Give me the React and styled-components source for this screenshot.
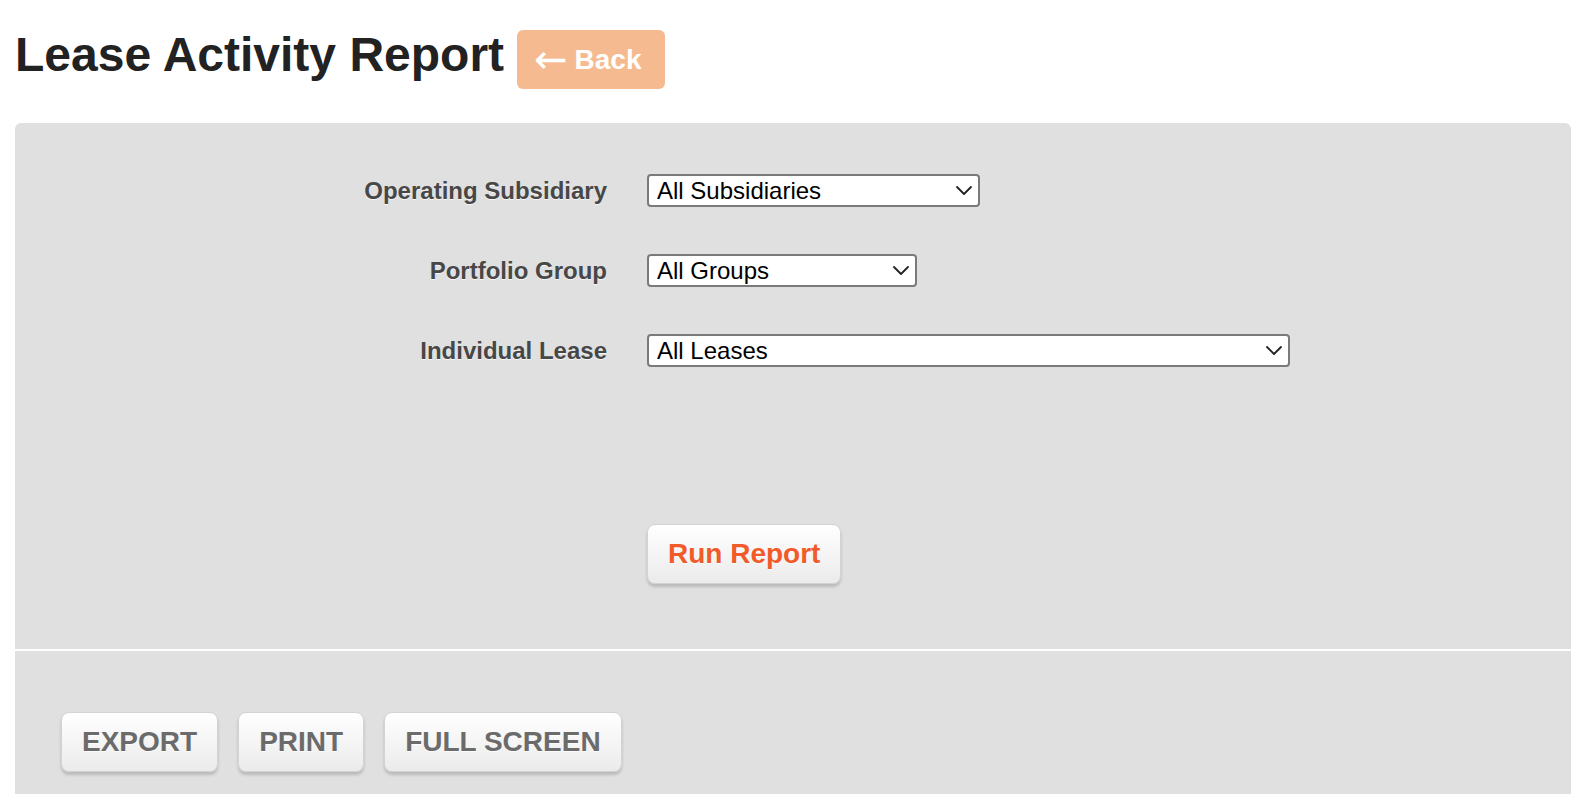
import React from 'react';
import styled, { createGlobalStyle } from 'styled-components';

const GlobalStyle = createGlobalStyle`
  html, body { margin: 0; padding: 0; background: #ffffff; }
  body { font-family: "Liberation Sans", Arial, Helvetica, sans-serif; }
  * { box-sizing: border-box; }
`;

const Page = styled.div`
  padding: 0 15px;
`;

const Header = styled.header`
  display: flex;
  align-items: flex-start;
  gap: 13px;
  padding-top: 27px;
`;

const Title = styled.h1`
  margin: 0;
  font-size: 48px;
  line-height: 55px;
  font-weight: 700;
  color: #222222;
`;

const BackButton = styled.button`
  display: inline-flex;
  align-items: center;
  gap: 7px;
  margin-top: 3px;
  height: 59px;
  padding: 0 23px 0 17px;
  border: none;
  border-radius: 6px;
  background: #f5ba8f;
  color: #ffffff;
  font-family: "Liberation Sans", Arial, sans-serif;
  font-size: 28px;
  font-weight: 700;
  line-height: 32px;
  cursor: pointer;
`;

const Arrow = styled.span`
  font-family: "DejaVu Sans", sans-serif;
  font-weight: 400;
  font-size: 40px;
  line-height: 32px;
  position: relative;
  top: -1px;
`;

const Panel = styled.section`
  margin-top: 34px;
  background: #e0e0e0;
  border-radius: 6px 6px 0 0;
`;

const FormSection = styled.div`
  padding: 51px 0 65px;
  border-bottom: 2px solid #ffffff;
`;

const FormGrid = styled.div`
  display: grid;
  grid-template-columns: 592px 1fr;
  column-gap: 40px;
  row-gap: 47px;
  align-items: center;
  justify-items: start;
`;

const Label = styled.label`
  justify-self: end;
  font-size: 24px;
  font-weight: 700;
  color: #474747;
  text-shadow: 0 1px 0 rgba(255, 255, 255, 0.7);
  white-space: nowrap;
`;

const SelectWrap = styled.div`
  position: relative;
  width: ${(p) => p.$width}px;
`;

const Select = styled.select`
  appearance: none;
  -webkit-appearance: none;
  display: block;
  width: 100%;
  height: 33px;
  padding: 0 30px 0 8px;
  border: 2px solid #7a7a7a;
  border-radius: 4px;
  background: #ffffff;
  color: #000000;
  font-family: "Liberation Sans", Arial, sans-serif;
  font-size: 24px;
  line-height: 29px;
`;

const Chevron = styled.svg`
  position: absolute;
  right: 8px;
  top: 50%;
  width: 16px;
  height: 9px;
  margin-top: -5px;
  pointer-events: none;
`;

const RaisedButton = styled.button`
  height: 60px;
  padding: 0 20px;
  border: 1px solid #d3d3d3;
  border-radius: 8px;
  background: linear-gradient(#ffffff, #ebebeb);
  box-shadow: 0 3px 3px rgba(0, 0, 0, 0.17);
  color: ${(p) => (p.$accent ? '#f15a29' : '#6b6b6b')};
  font-family: "Liberation Sans", Arial, sans-serif;
  font-size: 28px;
  font-weight: 700;
  line-height: 32px;
  text-shadow: 0 1px 0 rgba(255, 255, 255, 0.8);
  cursor: pointer;
  white-space: nowrap;
`;

const RunCell = styled.div`
  grid-column: 2;
  margin-top: 110px;
`;

const Toolbar = styled.div`
  display: flex;
  gap: 20px;
  padding: 61px 46px 40px;
`;

function Dropdown({ width, value }) {
  return (
    <SelectWrap $width={width}>
      <Select defaultValue={value}>
        <option value={value}>{value}</option>
      </Select>
      <Chevron viewBox="0 0 16 9">
        <path d="M1 1 L8 8 L15 1" fill="none" stroke="#222" strokeWidth="1.8" strokeLinecap="round" strokeLinejoin="round" />
      </Chevron>
    </SelectWrap>
  );
}

export default function App() {
  return (
    <>
      <GlobalStyle />
      <Page>
        <Header>
          <Title>Lease Activity Report</Title>
          <BackButton>
            <Arrow>←</Arrow>
            <span>Back</span>
          </BackButton>
        </Header>
        <Panel>
          <FormSection>
            <FormGrid>
              <Label>Operating Subsidiary</Label>
              <Dropdown width={333} value="All Subsidiaries" />
              <Label>Portfolio Group</Label>
              <Dropdown width={270} value="All Groups" />
              <Label>Individual Lease</Label>
              <Dropdown width={643} value="All Leases" />
              <RunCell>
                <RaisedButton $accent>Run Report</RaisedButton>
              </RunCell>
            </FormGrid>
          </FormSection>
          <Toolbar>
            <RaisedButton>EXPORT</RaisedButton>
            <RaisedButton>PRINT</RaisedButton>
            <RaisedButton>FULL SCREEN</RaisedButton>
          </Toolbar>
        </Panel>
      </Page>
    </>
  );
}
